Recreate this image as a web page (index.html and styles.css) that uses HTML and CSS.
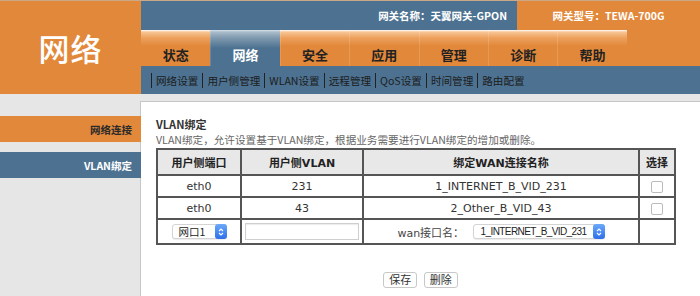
FILE: index.html
```html
<!DOCTYPE html>
<html lang="zh-CN">
<head>
    <meta charset="UTF-8">
    <title>网络 - VLAN绑定</title>
    <link rel="stylesheet" href="styles.css">
</head>
<body>
    <div class="top">
        <div class="logo">网络</div>
        <div class="head">
            <div class="info">
                <div class="gw-name">网关名称：天翼网关-GPON</div>
                <div class="gw-model">网关型号：TEWA-700G</div>
            </div>
            <div class="tabs">
                <a class="tab">状态</a>
                <a class="tab active">网络</a>
                <a class="tab">安全</a>
                <a class="tab">应用</a>
                <a class="tab">管理</a>
                <a class="tab">诊断</a>
                <a class="tab">帮助</a>
            </div>
            <div class="submenu">
                <a>网络设置</a>
                <a>用户侧管理</a>
                <a>WLAN设置</a>
                <a>远程管理</a>
                <a>QoS设置</a>
                <a>时间管理</a>
                <a>路由配置</a>
            </div>
        </div>
    </div>

    <div class="main">
        <!-- left menu -->
        <div class="side">
            <div class="side-item orange">网络连接</div>
            <div class="side-item blue">VLAN绑定</div>
        </div>

        <div class="content">
            <div class="title">VLAN绑定</div>
            <div class="desc">VLAN绑定，允许设置基于VLAN绑定，根据业务需要进行VLAN绑定的增加或删除。</div>

            <table class="vlan-table">
                <tr class="head-row">
                    <th class="c1">用户侧端口</th>
                    <th class="c2">用户侧VLAN</th>
                    <th class="c3">绑定WAN连接名称</th>
                    <th class="c4">选择</th>
                </tr>
                <tr>
                    <td>eth0</td>
                    <td>231</td>
                    <td>1_INTERNET_B_VID_231</td>
                    <td><span class="check"></span></td>
                </tr>
                <tr>
                    <td>eth0</td>
                    <td>43</td>
                    <td>2_Other_B_VID_43</td>
                    <td><span class="check"></span></td>
                </tr>
                <tr class="edit-row">
                    <td>
                        <span class="sel sel-port">网口1
                            <span class="arrow"><svg width="6" height="10" viewBox="0 0 6 10"><path d="M1 4 L3 2 L5 4 M1 6 L3 8 L5 6" fill="none" stroke="#fff" stroke-width="1.1"/></svg></span>
                        </span>
                    </td>
                    <td><span class="text-input"></span></td>
                    <td>
                        <span class="wan-label">wan接口名：</span>
                        <span class="sel sel-wan">1_INTERNET_B_VID_231
                            <span class="arrow"><svg width="6" height="10" viewBox="0 0 6 10"><path d="M1 4 L3 2 L5 4 M1 6 L3 8 L5 6" fill="none" stroke="#fff" stroke-width="1.1"/></svg></span>
                        </span>
                    </td>
                    <td></td>
                </tr>
            </table>

            <div class="actions">
                <button>保存</button>
                <button>删除</button>
            </div>
        </div>
    </div>
</body>
</html>
```

FILE: styles.css
```css
body {
    margin: 0;
    font-family: "Noto Sans CJK SC", sans-serif;
    font-size: 11px;
    color: #333;
    background: #e6e6e6;
    border-top: 1px solid #c9a888;
    height: 295px;
    overflow: hidden;
}

/* header */
.top {
    display: flex;
    height: 93px;
}

.logo {
    width: 141px;
    background: #e2883a;
    color: #fff;
    font-size: 31px;
    font-weight: 500;
    display: flex;
    align-items: center;
    justify-content: center;
    letter-spacing: 1px;
}

.head {
    flex: 1;
    display: flex;
    flex-direction: column;
}

.info {
    height: 29px;
    display: flex;
    background: #4d7291;
    color: #fff;
    font-size: 10.5px;
    font-weight: bold;
}

.gw-name {
    flex: 1;
    display: flex;
    align-items: center;
    justify-content: flex-end;
    padding-right: 10px;
}

.gw-model {
    width: 183px;
    background: #e2883a;
    display: flex;
    align-items: center;
    justify-content: center;
}

.tabs {
    height: 36px;
    display: flex;
    background: #e2883a;
}

.tab {
    width: 69.4px;
    display: flex;
    align-items: flex-end;
    justify-content: center;
    padding-bottom: 2px;
    box-sizing: border-box;
    font-size: 13px;
    font-weight: bold;
    color: #222;
    background: linear-gradient(#fff 0, #f7c594 2px, #eda05c 8px, #e2883a 16px);
    border-left: 1px solid rgba(255, 255, 255, 0.15);
}

.tab:first-child {
    border-left: none;
}

.tab.active {
    color: #fff;
    background: linear-gradient(#d9e2ea 0, #a9bccb 2px, #7f99ae 8px, #4d7291 18px);
}

.submenu {
    height: 28px;
    display: flex;
    align-items: center;
    padding-left: 10px;
    background: #4d7291;
}

.submenu a {
    color: #1c1c1c;
    border-left: 1px solid #222;
    padding: 0 4px 0 4px;
    line-height: 15px;
    font-size: 10.6px;
}

/* body */
.main {
    display: flex;
    padding-top: 7px;
    height: 195px;
}

.side {
    width: 140px;
    padding-top: 15px;
}

.side-item {
    position: relative;
    margin-right: -1px;
    height: 26px;
    display: flex;
    align-items: center;
    justify-content: flex-end;
    padding-right: 9px;
    font-size: 10.5px;
    font-weight: bold;
    z-index: 1;
}

.side-item.orange {
    background: #e2883a;
    color: #2a2a2a;
}

.side-item.blue {
    margin-top: 10px;
    background: #4d7291;
    color: #fff;
}

.content {
    flex: 1;
    background: #fff;
    border-top: 1px solid #c6c6c6;
    border-left: 1px solid #c6c6c6;
    padding: 14px 0 0 15px;
}

.title {
    font-weight: bold;
    font-size: 11px;
    line-height: 16px;
    color: #333;
}

.desc {
    color: #666;
    font-size: 10.6px;
    line-height: 15px;
}

.vlan-table {
    border-collapse: collapse;
    width: 520px;
    margin-top: 1px;
    font-family: "DejaVu Sans", "Noto Sans CJK SC", sans-serif;
    font-size: 11px;
}

.vlan-table th,
.vlan-table td {
    border: 2px solid #555;
    text-align: center;
    padding: 0;
    height: 20px;
}

.vlan-table th {
    background: #e8e8e8;
    color: #222;
    height: 24px;
}

.vlan-table .edit-row td {
    height: 23px;
}

.c1 { width: 82px; }
.c2 { width: 120px; }
.c3 { width: 274px; }

.check {
    display: inline-block;
    width: 10px;
    height: 10px;
    border: 1px solid #bbb;
    border-radius: 2px;
    vertical-align: middle;
}

.sel {
    display: inline-flex;
    align-items: center;
    height: 15px;
    box-sizing: border-box;
    border: 1px solid #d4d4d4;
    border-radius: 3px;
    padding-left: 6px;
    background: #fff;
    color: #222;
    font-family: "Noto Sans CJK SC", sans-serif;
    font-size: 10.5px;
    vertical-align: middle;
    box-shadow: 0 1px 1px rgba(0, 0, 0, 0.08);
}

.sel-port {
    width: 55px;
}

.sel-wan {
    width: 132px;
    padding-left: 7px;
    font-family: "Liberation Sans", sans-serif;
    font-size: 10px;
    letter-spacing: -0.6px;
}

.sel .arrow {
    margin-left: auto;
    width: 12px;
    height: 15px;
    margin-right: -1px;
    border-radius: 3px;
    background: linear-gradient(#6ba9fb, #2e6fe8);
    display: flex;
    align-items: center;
    justify-content: center;
}

.text-input {
    display: inline-block;
    width: 114px;
    height: 17px;
    box-sizing: border-box;
    border: 1px solid #cfcfcf;
    box-shadow: inset 0 1px 1px rgba(0, 0, 0, 0.08);
    vertical-align: middle;
}

.wan-label {
    color: #444;
    margin-right: 5px;
    vertical-align: middle;
}

.actions {
    text-align: center;
    margin-top: 26px;
    padding-right: 15px;
}

.actions button {
    font-family: "Noto Sans CJK SC", sans-serif;
    font-size: 11px;
    height: 16px;
    line-height: 13px;
    padding: 0 5px;
    margin: 0 2px;
    border: 1px solid #c8c8c8;
    border-radius: 3px;
    background: #fff;
    color: #333;
}
```
